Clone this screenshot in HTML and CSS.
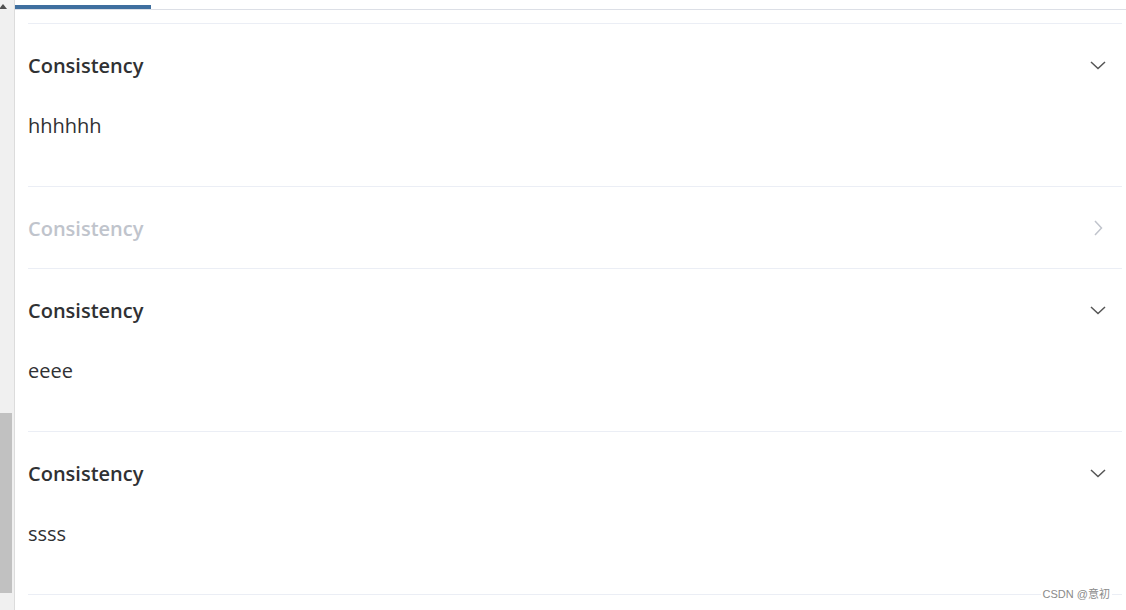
FILE: index.html
```html
<!DOCTYPE html>
<html lang="en">
<head>
<meta charset="utf-8">
<title>Collapse</title>
<link rel="stylesheet" href="styles.css">
</head>
<body>
<div class="page">
  <div class="scrollbar">
    <div class="arrow"></div>
    <div class="thumb"></div>
  </div>
  <div class="main">
    <div class="tabs"><div class="tab-active"></div></div>
    <div class="collapse">
      <div class="item active">
        <div class="header"><span>Consistency</span>
          <svg class="chev" width="18" height="18" viewBox="0 0 18 18"><path d="M2 6 L9 12.5 L16 6" fill="none" stroke="#555" stroke-width="1.5"/></svg>
        </div>
        <div class="content">hhhhhh</div>
      </div>
      <div class="item disabled">
        <div class="header"><span>Consistency</span>
          <svg class="chev" width="18" height="18" viewBox="0 0 18 18"><path d="M6 2 L12.5 9 L6 16" fill="none" stroke="#c0c4cc" stroke-width="1.5"/></svg>
        </div>
      </div>
      <div class="item active">
        <div class="header"><span>Consistency</span>
          <svg class="chev" width="18" height="18" viewBox="0 0 18 18"><path d="M2 6 L9 12.5 L16 6" fill="none" stroke="#555" stroke-width="1.5"/></svg>
        </div>
        <div class="content">eeee</div>
      </div>
      <div class="item active">
        <div class="header"><span>Consistency</span>
          <svg class="chev" width="18" height="18" viewBox="0 0 18 18"><path d="M2 6 L9 12.5 L16 6" fill="none" stroke="#555" stroke-width="1.5"/></svg>
        </div>
        <div class="content">ssss</div>
      </div>
    </div>
  </div>
</div>
<div class="watermark">CSDN @意初</div>
</body>
</html>
```
FILE: styles.css
```css
html, body {
  margin: 0;
  padding: 0;
  background: #fff;
  height: 100%;
  overflow: hidden;
}
body {
  font-family: "Open Sans", "Noto Sans", sans-serif;
  color: #303133;
}
.page {
  display: flex;
  height: 610px;
}
.scrollbar {
  width: 14px;
  flex: none;
  background: #f0f0f0;
  border-right: 1px solid #dcdcdc;
  position: relative;
}
.arrow {
  position: absolute;
  left: 0;
  top: 4px;
  width: 0;
  height: 0;
  border-left: 4px solid transparent;
  border-right: 4px solid transparent;
  border-bottom: 5px solid #505050;
  margin-left: -1px;
}
.thumb {
  position: absolute;
  left: 0;
  top: 413px;
  width: 12px;
  height: 180px;
  background: #c1c1c1;
}
.main {
  flex: 1;
  min-width: 0;
}
.tabs {
  height: 9px;
  border-bottom: 1px solid #dcdfe6;
  display: flex;
  align-items: flex-end;
}
.tab-active {
  width: 136px;
  height: 4px;
  background: #3f6f9f;
}
.collapse {
  margin: 13px 4px 0 13px;
  border-top: 1px solid #ebeef5;
}
.item {
  border-bottom: 1px solid #ebeef5;
}
.header {
  height: 79px;
  padding-top: 2px;
  display: flex;
  align-items: center;
  justify-content: space-between;
  font-size: 20px;
  font-weight: 600;
  color: #303133;
  padding-right: 15px;
}
.header .chev {
  margin-top: -2px;
}
.disabled .header {
  color: #c0c4cc;
}
.active .header {
  border-bottom: 1px solid transparent;
}
.content {
  height: 80px;
  box-sizing: border-box;
  padding-top: 8px;
  font-size: 20px;
  line-height: 24px;
  color: #303133;
}
.watermark {
  position: absolute;
  right: 14px;
  top: 586px;
  font-family: "Liberation Sans", "Noto Sans CJK SC", sans-serif;
  font-size: 11px;
  color: #8a8a8a;
  background: #fff;
  padding: 0 2px;
  line-height: 16px;
}
```
